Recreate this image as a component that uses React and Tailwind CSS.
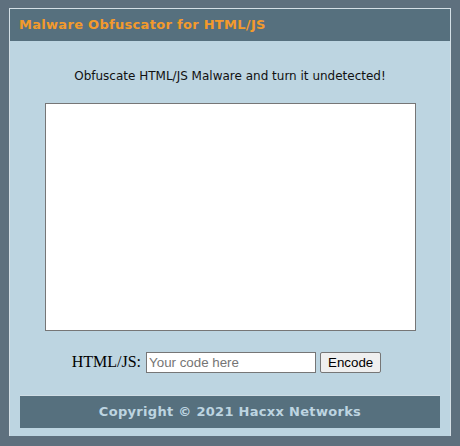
import React, { useState } from "react";

const App = () => {
  const [code, setCode] = useState("");

  return (
    <div className="min-h-screen bg-[#5e707e] pt-2 px-[9px] pb-[10px]" style={{ fontFamily: "'DejaVu Sans', Verdana, sans-serif" }}>
      <div className="border border-[#d4dfe6] border-b-0 bg-[#bdd5e1]">
        {/* header */}
        <div className="h-8 bg-[#56707e] flex items-center pl-[9px]">
          <h1 className="text-[13px] font-bold tracking-[0.3px] text-[#f39a2c]">Malware Obfuscator for HTML/JS</h1>
        </div>

        <p className="mt-[26px] text-center text-[12px] text-[#111]">
          Obfuscate HTML/JS Malware and turn it undetected!
        </p>

        <div className="mt-[18px] flex justify-center">
          <textarea className="ml-[1px] w-[371px] h-[228px] bg-white border border-[#767676] resize-none outline-none" />
        </div>

        <div className="mt-[19px] flex justify-center items-center pr-[7px]">
          <span className="text-[16px] text-black mr-[5px]" style={{ fontFamily: "'Liberation Serif', serif" }}>HTML/JS:</span>
          <input
            type="text"
            value={code}
            onChange={(e) => setCode(e.target.value)}
            placeholder="Your code here"
            className="w-[170px] h-[21px] px-[2px] bg-white border border-[#767676] text-[13.33px] text-black placeholder:text-[#757575] outline-none"
            style={{ fontFamily: "'Liberation Sans', Arial, sans-serif" }}
          />
          <button
            className="ml-[4px] h-[21px] px-[7px] bg-[#efefef] border border-[#767676] rounded-[2px] text-[13.33px] text-black"
            style={{ fontFamily: "'Liberation Sans', Arial, sans-serif" }}
          >
            Encode
          </button>
        </div>

        <div className="mt-[21px] mx-[10px] pb-[8px]">
          <div className="h-[33px] bg-[#56707e] border-t border-[#cfdde5] flex items-center justify-center">
            <span className="text-[13px] font-bold tracking-[0.3px] text-[#bdd5e1]">Copyright © 2021 Hacxx Networks</span>
          </div>
        </div>
      </div>
    </div>
  );
};

export default App;
